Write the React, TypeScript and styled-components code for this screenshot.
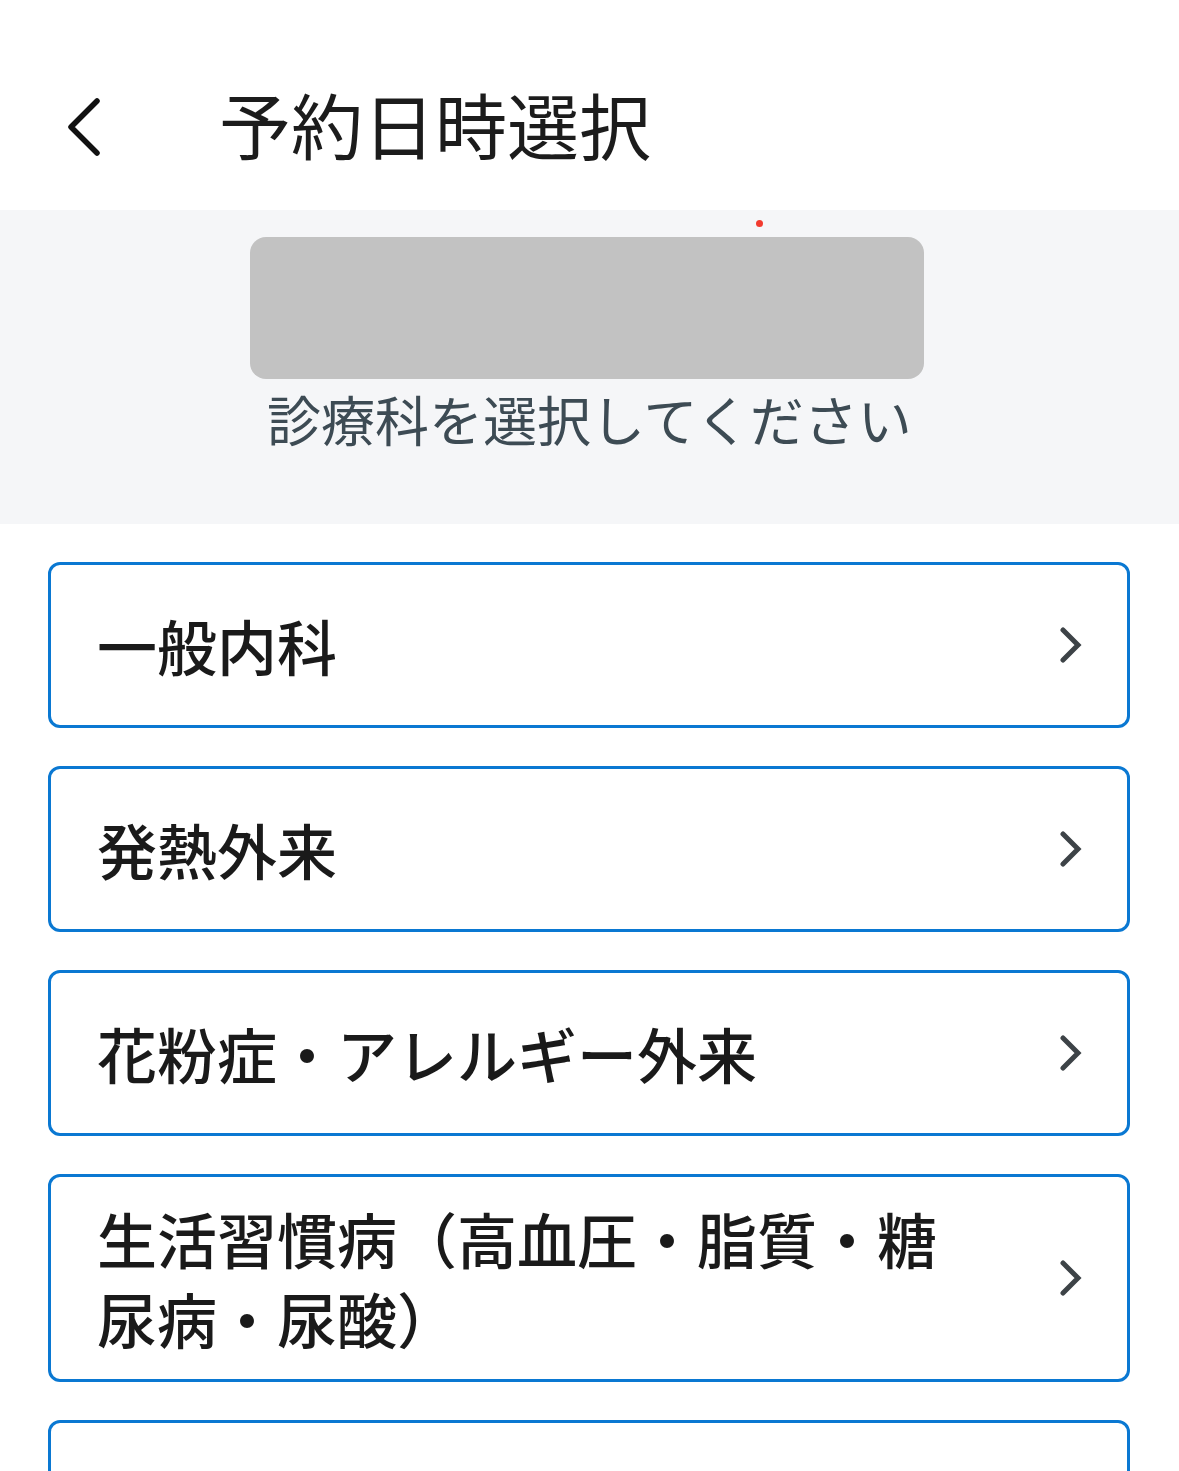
import styled, { createGlobalStyle } from 'styled-components'

const GlobalStyle = createGlobalStyle`
    html, body {
        margin: 0;
        padding: 0;
        background: #ffffff;
        font-family: "Noto Sans CJK JP", "Noto Sans", sans-serif;
    }
`

const departments = [
    '一般内科',
    '発熱外来',
    '花粉症・アレルギー外来',
    '生活習慣病（高血圧・脂質・糖尿病・尿酸）',
    '健康診断・予防接種',
]

const Page = styled.div`
    width: 1179px;
    min-height: 1471px;
    background: #ffffff;
`

const Header = styled.header`
    box-sizing: border-box;
    height: 210px;
    padding: 36px 0 0 67px;
    display: flex;
    align-items: center;
`

const BackButton = styled.button`
    border: none;
    background: none;
    padding: 0;
    width: 36px;
    height: 58px;
    margin-top: 8px;
    display: flex;
    align-items: center;
    justify-content: center;
    cursor: pointer;
`

const Title = styled.h1`
    margin: 0 0 0 116px;
    font-size: 72px;
    font-weight: 400;
    line-height: 1;
    color: #1c1c1c;
`

const Notice = styled.section`
    position: relative;
    box-sizing: border-box;
    height: 314px;
    background: #f5f6f8;
    padding-top: 27px;
    display: flex;
    flex-direction: column;
    align-items: center;
`

const Dot = styled.span`
    position: absolute;
    top: 10px;
    left: 756px;
    width: 7px;
    height: 7px;
    border-radius: 50%;
    background: #f23b2f;
`

const Placeholder = styled.div`
    width: 674px;
    height: 142px;
    margin-right: 5px;
    border-radius: 16px;
    background: #c2c2c2;
`

const Hint = styled.p`
    margin: 0;
    font-size: 54px;
    line-height: 80px;
    font-weight: 400;
    color: #3d4b54;
`

const List = styled.div`
    padding: 38px 49px 0 48px;
    display: flex;
    flex-direction: column;
    gap: 38px;
`

const Card = styled.button`
    box-sizing: border-box;
    width: 100%;
    min-height: 166px;
    padding: 21px 45px 21px 46px;
    border: 3px solid #0a78d2;
    border-radius: 12px;
    background: #ffffff;
    display: flex;
    align-items: center;
    justify-content: space-between;
    text-align: left;
    font-family: inherit;
    cursor: pointer;
`

const Label = styled.span`
    max-width: 880px;
    font-size: 60px;
    line-height: 80px;
    font-weight: 500;
    color: #1a1a1a;
`

const Chevron = styled.svg`
    flex-shrink: 0;
    width: 22px;
    height: 36px;
`

export default function App() {
    return (
        <Page>
            <GlobalStyle />
            <Header>
                <BackButton aria-label="戻る">
                    <svg width="36" height="58" viewBox="0 0 36 58">
                        <path d="M30 3 L4 29 L30 55" fill="none" stroke="#111" strokeWidth="5.5" strokeLinecap="round" strokeLinejoin="round" />
                    </svg>
                </BackButton>
                <Title>予約日時選択</Title>
            </Header>
            <Notice>
                <Dot />
                <Placeholder />
                <Hint>診療科を選択してください</Hint>
            </Notice>
            <List>
                {departments.map(name => (
                    <Card key={name}>
                        <Label>{name}</Label>
                        <Chevron viewBox="0 0 22 36">
                            <path d="M3 3 L18 18 L3 33" fill="none" stroke="#3d4347" strokeWidth="5" strokeLinecap="round" strokeLinejoin="miter" />
                        </Chevron>
                    </Card>
                ))}
            </List>
        </Page>
    )
}
